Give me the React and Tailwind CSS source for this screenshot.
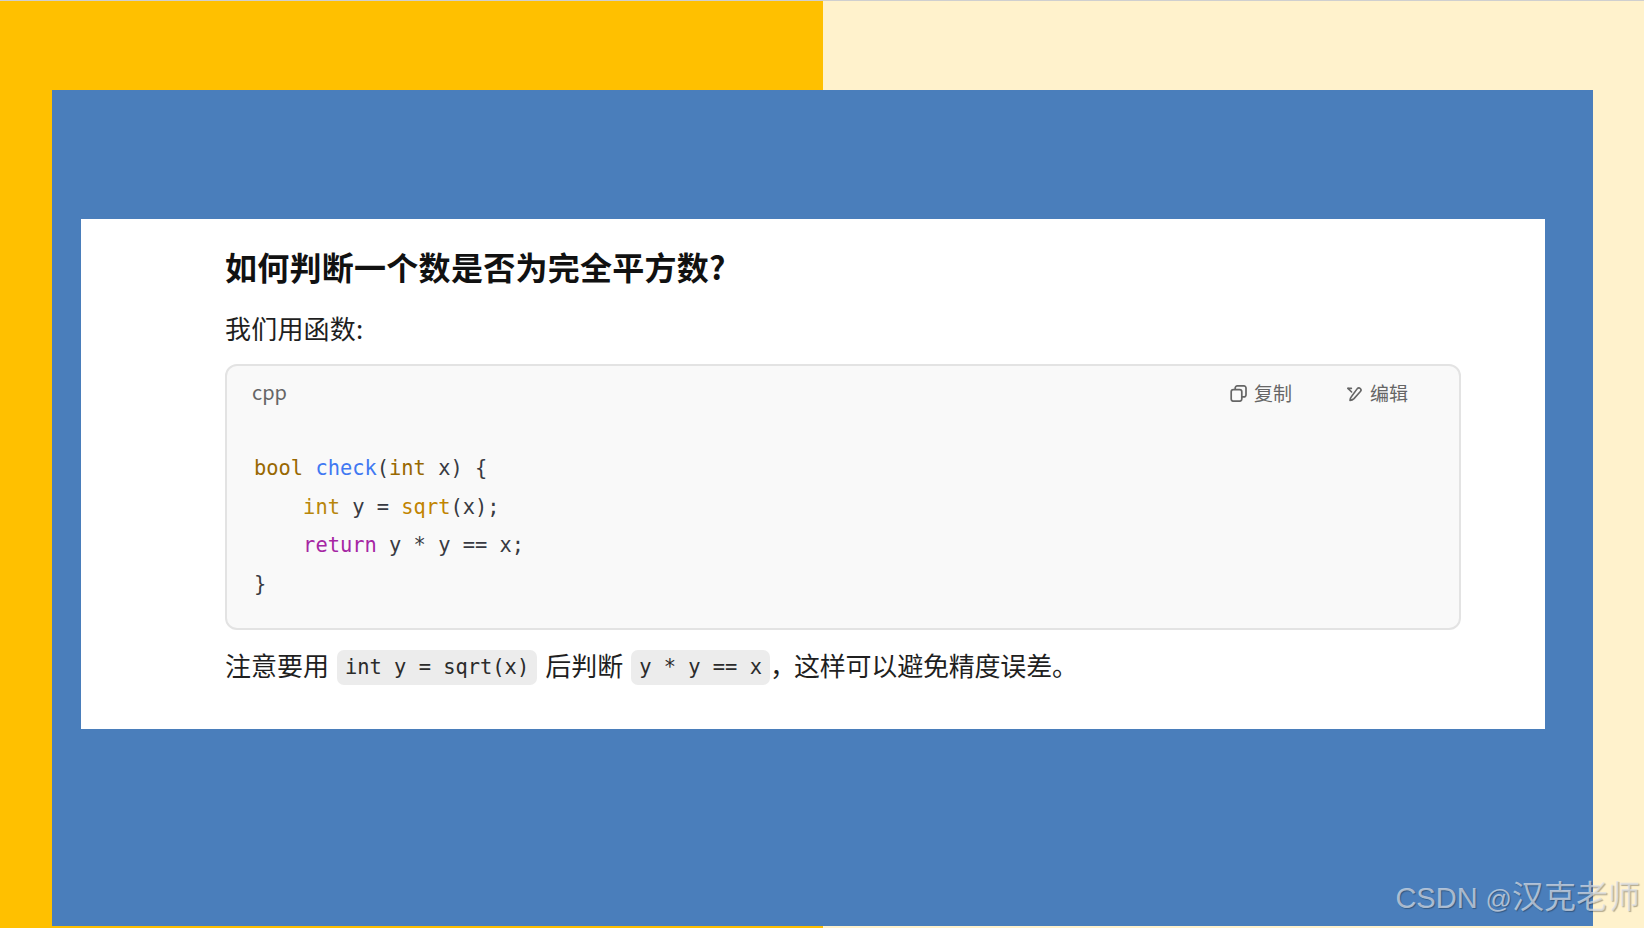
const cjk = '"Noto Sans CJK SC", "Liberation Sans", sans-serif';

function CopyIcon() {
  return (
    <svg width="17" height="17" viewBox="0 0 17 17" fill="none" stroke="#666" strokeWidth="1.7">
      <rect x="1.2" y="4.6" width="10.6" height="11.6" rx="2.2" />
      <path d="M5.2 4.6V3a2.1 2.1 0 0 1 2.1-2.1h6.6A2.1 2.1 0 0 1 16 3v6.8a2.1 2.1 0 0 1-2.1 2.1h-2.1" />
    </svg>
  );
}

function EditIcon() {
  return (
    <svg width="17" height="17" viewBox="0 0 17 17" fill="none" stroke="#666" strokeWidth="1.6" strokeLinejoin="round" strokeLinecap="round">
      <path d="M11.3 3.6a2.1 2.1 0 0 1 3.1 2.9L8 13.6c-1 1-2.4 1.7-4 1.8.1-1.6.7-3 1.7-4.1z" />
      <path d="M2 3.4 5.6 7" />
      <path d="M2 3.4h3.4" />
    </svg>
  );
}

function Code({ children }) {
  return (
    <code className="mx-[8px] mt-[4px] inline-block h-[35px] rounded-[7px] bg-[#ececec] px-[8px] font-['DejaVu_Sans_Mono',monospace] text-[20.4px] leading-[35px] text-[#2b2b2b]">
      {children}
    </code>
  );
}

export default function App() {
  return (
    <div
      className="relative h-[928px] w-[1644px] overflow-hidden border-t border-[#cfcfcf] bg-[linear-gradient(to_right,#ffc000_823px,#fff2cc_823px)] pb-[2px] pl-[52px] pr-[51px] pt-[89px]"
      style={{ fontFamily: cjk }}
    >
      <div className="h-full bg-[#4a7ebb] pl-[29px] pr-[48px] pt-[129px]">
        <div className="h-[510px] bg-white pl-[144px] pr-[84px] pt-[24px] text-[#1f1f1f]">
          <h1 className="text-[32px] font-bold leading-[46px] tracking-[0.27px] text-[#111]">如何判断一个数是否为完全平方数?</h1>
          <p className="mt-[19px] text-[26px] leading-[40px] tracking-[0.2px]">我们用函数:</p>
          <div className="mt-[16px] h-[266px] rounded-[12px] border-2 border-[#e3e3e3] bg-[#f9f9f9]">
            <div className="flex h-[54px] items-center pl-[25px] pr-[51px] text-[#666]">
              <span className="-mt-[2px] flex-1 text-[20px]">cpp</span>
              <span className="flex items-center gap-[7px] text-[19px]"><CopyIcon />复制</span>
              <span className="ml-[54px] flex items-center gap-[7px] text-[19px]"><EditIcon />编辑</span>
            </div>
            <pre className="pl-[27px] pt-[29px] font-['DejaVu_Sans_Mono',monospace] text-[20.4px] leading-[38.6px] text-[#383a42]">
              <span className="text-[#986801]">bool</span>{" "}
              <span className="text-[#4078f2]">check</span>(<span className="text-[#986801]">int</span> x) {"{"}{"\n"}
              {"    "}<span className="text-[#b8860b]">int</span> y = <span className="text-[#c18401]">sqrt</span>(x);{"\n"}
              {"    "}<span className="text-[#a626a4]">return</span> y * y == x;{"\n"}
              {"}"}
            </pre>
          </div>
          <p className="mt-[15px] flex items-center text-[26px] leading-[40px]">
            注意要用<Code>int y = sqrt(x)</Code>后判断<Code>y * y == x</Code><span className="-ml-[8px] -mr-[2px]">，</span><span className="tracking-[-0.2px]">这样可以避免精度误差。</span>
          </p>
        </div>
      </div>
      <div className="absolute bottom-[9px] right-[4px] flex items-baseline gap-[8px] font-['Liberation_Sans','Noto_Sans_CJK_SC',sans-serif] leading-[40px] text-[#dfe3ea]/70 [text-shadow:1px_1px_1px_rgba(0,0,0,0.3)]">
        <span className="text-[29px]">CSDN</span>
        <span className="flex items-baseline"><span className="text-[26px]">@</span><span className="text-[32px]">汉克老师</span></span>
      </div>
    </div>
  );
}
